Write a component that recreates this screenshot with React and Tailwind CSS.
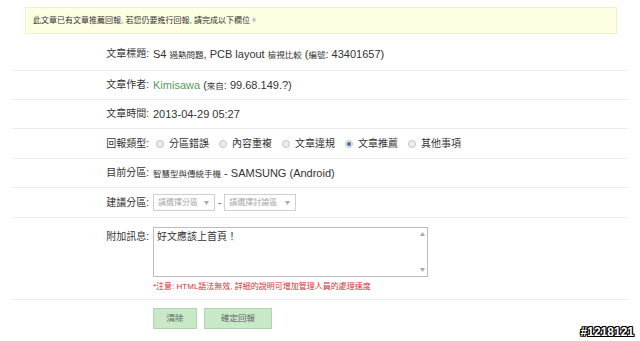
import React from "react";

const FONT = { fontFamily: '"Liberation Sans", "Noto Sans CJK TC", sans-serif' };

function C({ children }) {
  return <span className="text-[8.5px]">{children}</span>;
}

function Row({ label, className, children, top }) {
  return (
    <div className={"flex border-b border-[#ececec] " + className}>
      <div className={"w-[137px] shrink-0 text-right text-[10px] leading-[14px] text-[#333] " + (top ? "pt-[3px]" : "self-center")}>
        {label}
      </div>
      <div className={"pl-[4px] text-[11px] text-[#333] " + (top ? "" : "self-center")}>{children}</div>
    </div>
  );
}

function Radio({ checked, label }) {
  return (
    <div className="flex items-center mr-[10px]">
      <div className="w-[8px] h-[8px] rounded-full border border-[#c4c4c4] bg-[#ececec] flex items-center justify-center mr-[5px]">
        {checked && <div className="w-[4px] h-[4px] rounded-full bg-[#3f6fa6]" />}
      </div>
      <span className="text-[10px] leading-[14px] text-[#333]">{label}</span>
    </div>
  );
}

function Arrow({ up }) {
  return (
    <svg width="5" height="4" viewBox="0 0 5 4">
      {up ? <polygon points="0,4 5,4 2.5,0" fill="#a8a8a8" /> : <polygon points="0,0 5,0 2.5,4" fill="#a8a8a8" />}
    </svg>
  );
}

function Select({ text, w }) {
  return (
    <div className={"h-[17px] border border-[#cfcfcf] bg-white flex items-center justify-between pl-[4px] pr-[5px] " + w}>
      <span className="text-[8px] leading-[10px] text-[#a8a8a8]">{text}</span>
      <Arrow />
    </div>
  );
}

export default function App() {
  return (
    <div className="relative w-[640px] h-[341px] bg-white overflow-hidden" style={FONT}>
      <div className="ml-[25px] mr-[23px] mt-[7px] h-[27px] bg-[#fefee2] border border-[#f1efcf] flex items-center pl-[7px]">
        <span className="text-[8px] leading-[10px] text-[#333]">此文章已有文章推薦回報, 若您仍要進行回報, 請完成以下欄位。</span>
      </div>

      <div className="mx-[12px] mt-[4px]">
        <Row label="文章標題:" className="h-[33px]">
          S4 <C>過熱問題</C>, PCB layout <C>檢視比較</C> (<C>編號</C>: 43401657)
        </Row>
        <Row label="文章作者:" className="h-[29px]">
          <span className="text-[#5a985a]">Kimisawa</span> (<C>來自</C>: 99.68.149.?)
        </Row>
        <Row label="文章時間:" className="h-[29px]">
          2013-04-29 05:27
        </Row>
        <Row label="回報類型:" className="h-[30px]">
          <div className="flex items-center pl-[3px]">
            <Radio label="分區錯誤" />
            <Radio label="內容重複" />
            <Radio label="文章違規" />
            <Radio label="文章推薦" checked />
            <Radio label="其他事項" />
          </div>
        </Row>
        <Row label="目前分區:" className="h-[29px]">
          <C>智慧型與傳統手機</C> - SAMSUNG (Android)
        </Row>
        <Row label="建議分區:" className="h-[30px]">
          <div className="flex items-center">
            <Select text="請選擇分區" w="w-[62px]" />
            <span className="mx-[3px] text-[10px] text-[#555]">-</span>
            <Select text="請選擇討論區" w="w-[72px]" />
          </div>
        </Row>
        <Row label="附加訊息:" className="h-[82px] pt-[9px]" top>
          <div className="w-[275px] h-[50px] border border-[#bdbdbd] flex">
            <div className="flex-1 pl-[3px] pt-[2px] text-[10px] leading-[13px] text-[#333]">好文應該上首頁！</div>
            <div className="w-[10px] flex flex-col items-center justify-between py-[4px]">
              <Arrow up />
              <Arrow />
            </div>
          </div>
          <div className="mt-[5px] text-[8px] leading-[10px] text-[#cc3333]">*注意: HTML語法無效, 詳細的說明可增加管理人員的處理速度</div>
        </Row>
        <div className="flex pl-[141px] pt-[8px] gap-[7px]">
          <div className="w-[44px] h-[21px] bg-[#c8e8c8] border border-[#aed6ae] flex items-center justify-center text-[8.5px] text-[#666]">清除</div>
          <div className="w-[68px] h-[21px] bg-[#c8e8c8] border border-[#aed6ae] flex items-center justify-center text-[8.5px] text-[#666]">確定回報</div>
        </div>
      </div>

      <div className="absolute right-[6px] bottom-[3px] text-[12px] font-bold leading-[12px] text-white [text-shadow:1px_0_#000,-1px_0_#000,0_1px_#000,0_-1px_#000,1px_1px_#000,-1px_-1px_#000,1px_-1px_#000,-1px_1px_#000]">
        #1218121
      </div>
    </div>
  );
}
